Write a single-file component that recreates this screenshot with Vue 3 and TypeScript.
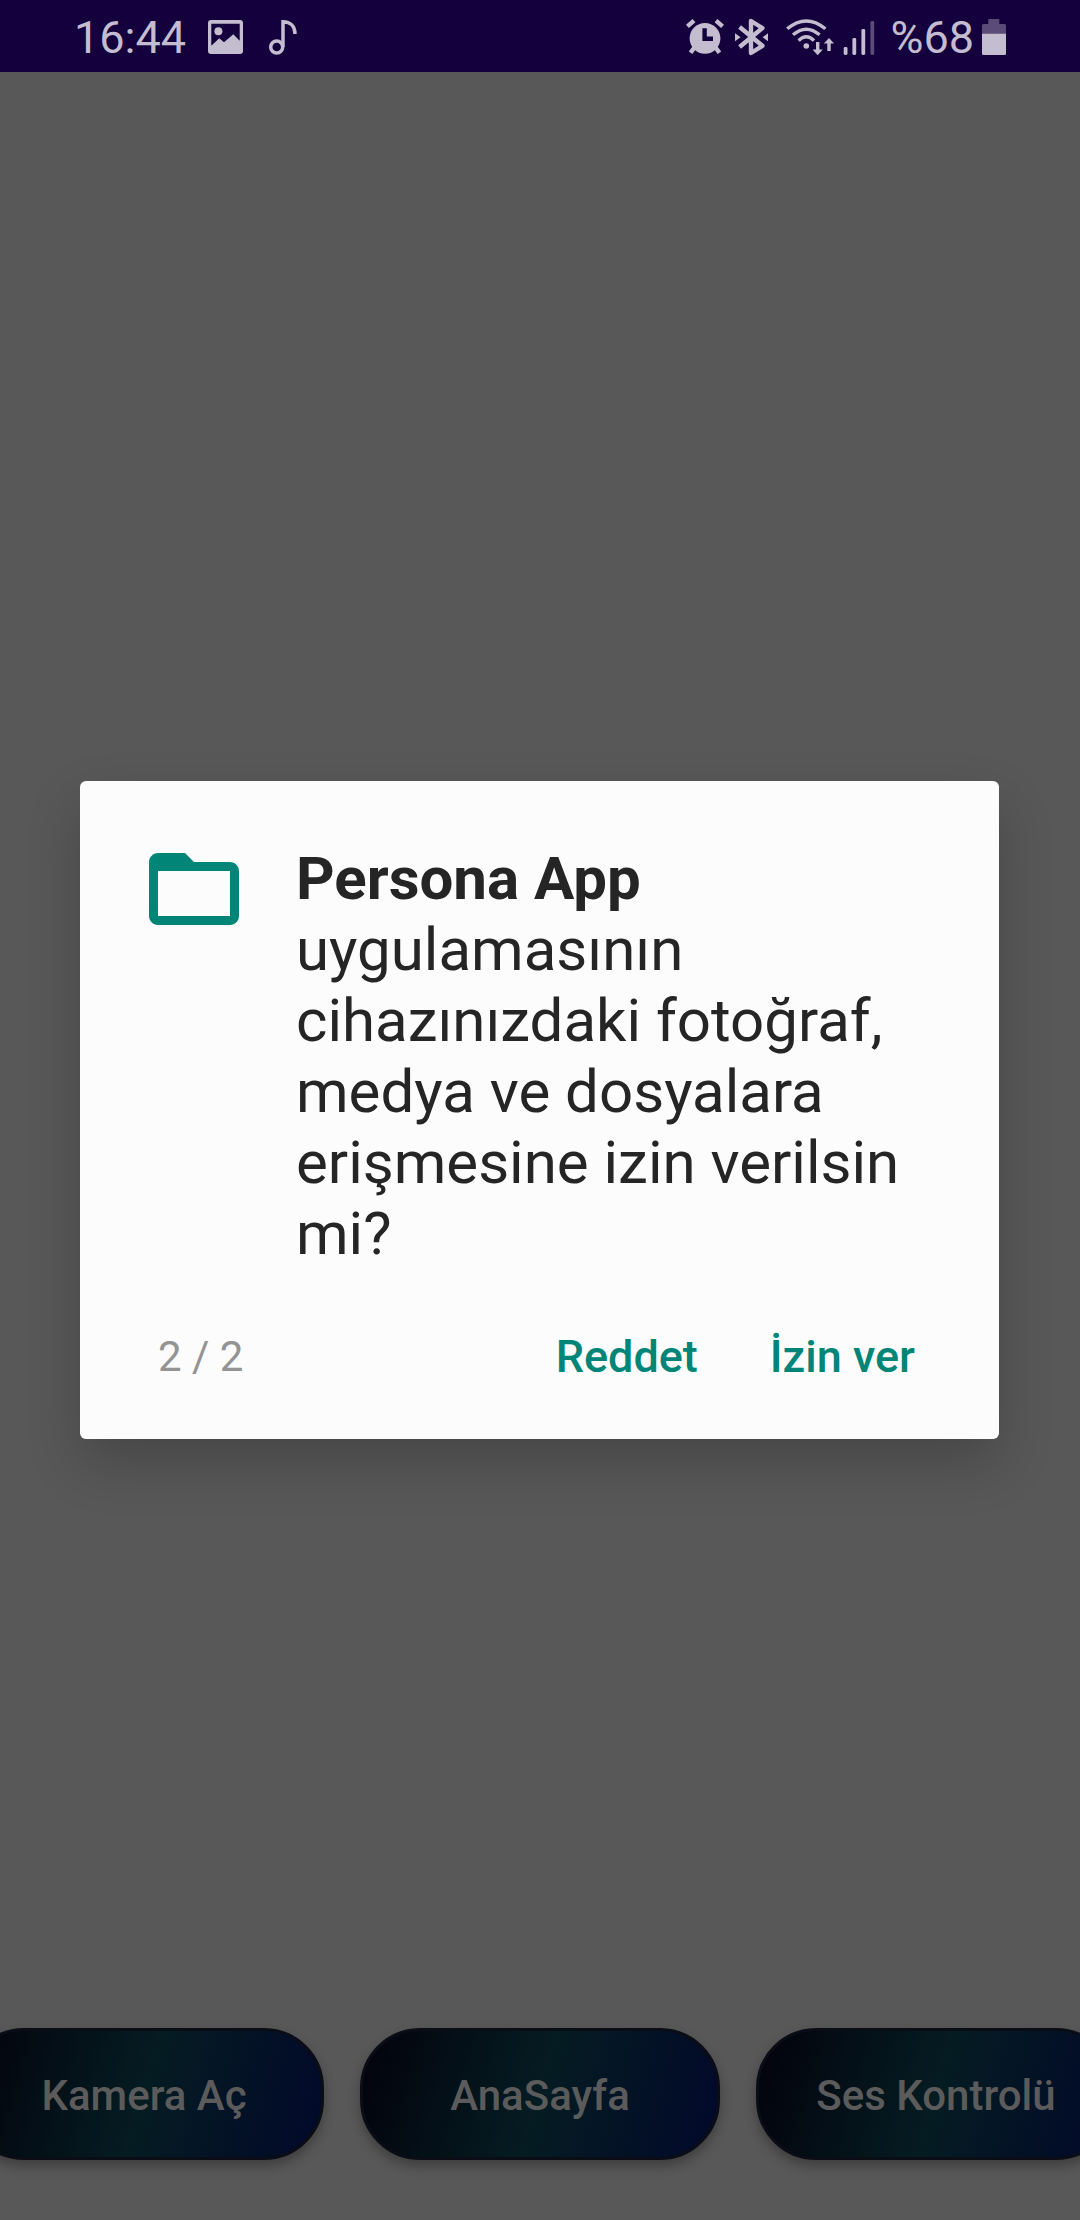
<script setup lang="ts">
import { ref } from 'vue'

interface NavItem {
  id: string
  label: string
}

const navItems: NavItem[] = [
  { id: 'camera', label: 'Kamera Aç' },
  { id: 'home', label: 'AnaSayfa' },
  { id: 'sound', label: 'Ses Kontrolü' },
]

const step = ref(2)
const totalSteps = 2
</script>

<template>
  <div class="screen">
    <header class="status-bar">
      <div class="status-left">
        <span class="status-text">16:44</span>
        <svg class="picture" width="35" height="40" viewBox="0 0 35 40" aria-hidden="true">
          <path
            fill="currentColor"
            fill-rule="evenodd"
            d="M3 4H32Q35 4 35 7V35Q35 38 32 38H3Q0 38 0 35V7Q0 4 3 4ZM3.3 7.8V29.7L11.3 22.3L16 26.3L25.3 18.3L31.7 24.7V7.8Z"
          />
          <circle cx="10.4" cy="15.3" r="4" fill="currentColor" />
        </svg>
        <svg class="note" width="30" height="40" viewBox="0 0 30 40" aria-hidden="true">
          <g fill="none" stroke="currentColor" stroke-width="3.5">
            <circle cx="8.7" cy="31" r="6" />
            <path d="M15 31V5.8C22.5 5.8 27 10.5 27 18" />
          </g>
        </svg>
      </div>
      <div class="status-right">
        <svg class="alarm" width="38" height="40" viewBox="0 0 38 40" aria-hidden="true">
          <circle cx="19" cy="22.3" r="15.4" fill="currentColor" />
          <path d="M18.6 12.3V22.8H27" fill="none" stroke="#14003c" stroke-width="4.4" />
          <path
            d="M1.4 10.4L8 4.6M30 4.6L36.6 10.4M8 32L4.6 36.8M30 32L33.4 36.8"
            fill="none"
            stroke="currentColor"
            stroke-width="4.4"
          />
        </svg>
        <svg class="bluetooth" width="33" height="40" viewBox="0 0 33 40" aria-hidden="true">
          <path
            d="M4.6 11L27.4 29.8L16 37V5L27.4 12L4.6 31"
            fill="none"
            stroke="currentColor"
            stroke-width="4.4"
            stroke-linejoin="round"
          />
          <path d="M0 17.3L5.6 21.3L0 25.3ZM33 17.3L27.6 21.3L33 25.3Z" fill="currentColor" />
        </svg>
        <svg class="wifi" width="49" height="40" viewBox="0 0 49 40" aria-hidden="true">
          <g fill="none" stroke="currentColor" stroke-width="3.4">
            <path d="M1.2 12.8Q20.3 -3 39.4 12.8" />
            <path d="M7 18.8Q20.3 7.6 33.6 18.8" />
            <path d="M12.6 24.6Q20.3 17 28 24.6" />
            <path d="M31.7 26V35M43 35V26" />
          </g>
          <circle cx="20.3" cy="30" r="2.8" fill="currentColor" />
          <path d="M26.6 33.6H36.8L31.7 39.2ZM37.9 27.6H48.1L43 22Z" fill="currentColor" />
        </svg>
        <svg class="signal" width="32" height="40" viewBox="0 0 32 40" aria-hidden="true">
          <g fill="currentColor">
            <rect x="0.7" y="31" width="3.8" height="8" rx="1.4" />
            <rect x="9.4" y="22" width="3.8" height="17" rx="1.4" />
            <rect x="18.4" y="13" width="3.8" height="26" rx="1.4" />
          </g>
          <rect x="27.4" y="5" width="3.8" height="34" rx="1.4" fill="#5a4b78" />
        </svg>
        <span class="status-text percent">%68</span>
        <svg class="battery" width="24" height="40" viewBox="0 0 24 40" aria-hidden="true">
          <path d="M6.3 3H17.3V8H22.5Q24 8 24 9.5V18H0V9.5Q0 8 1.5 8H6.3Z" fill="#5a4b78" />
          <path d="M0 17.7H24V37.5Q24 39 22.5 39H1.5Q0 39 0 37.5Z" fill="currentColor" />
        </svg>
      </div>
    </header>

    <main class="content"></main>

    <nav class="bottom-nav">
      <button v-for="item in navItems" :key="item.id" type="button" class="pill">
        {{ item.label }}
      </button>
    </nav>

    <div class="dialog-layer">
      <section class="dialog" role="dialog" aria-modal="true" aria-labelledby="permission-message">
        <div class="dialog-body">
          <svg class="folder" width="108" height="108" viewBox="0 0 24 24" aria-hidden="true">
            <path
              fill="#008577"
              d="M20 6H12L10 4H4C2.9 4 2.01 4.9 2.01 6L2 18C2 19.1 2.9 20 4 20H20C21.1 20 22 19.1 22 18V8C22 6.9 21.1 6 20 6ZM20 18H4V8H20V18Z"
            />
          </svg>
          <p id="permission-message" class="message">
            <strong>Persona App</strong> uygulamasının cihazınızdaki fotoğraf, medya ve dosyalara
            erişmesine izin verilsin mi?
          </p>
        </div>
        <footer class="dialog-footer">
          <span class="counter">{{ step }} / {{ totalSteps }}</span>
          <div class="actions">
            <button type="button" class="action">Reddet</button>
            <button type="button" class="action">İzin ver</button>
          </div>
        </footer>
      </section>
    </div>
  </div>
</template>

<style>
body {
  margin: 0;
  background: #585858;
}
</style>

<style scoped>
.screen {
  position: relative;
  display: flex;
  flex-direction: column;
  min-height: 100vh;
  overflow: hidden;
  background: #585858;
  font-family: Roboto, "Noto Sans", sans-serif;
}

button {
  margin: 0;
  border: 0;
  background: none;
  font-family: inherit;
  cursor: pointer;
}

svg {
  display: block;
  flex: none;
}

.status-bar {
  display: flex;
  align-items: center;
  justify-content: space-between;
  height: 72px;
  padding: 0 74px;
  background: #14003c;
  color: #c4bdd0;
}

.status-left,
.status-right {
  display: flex;
  align-items: center;
}

.status-text {
  padding-top: 4px;
  font-size: 45px;
  line-height: 68px;
}

.picture {
  margin-left: 22px;
}

.note {
  margin-left: 25px;
}

.bluetooth {
  margin-left: 11px;
}

.wifi {
  margin-left: 18px;
}

.signal {
  margin-left: 8px;
}

.percent {
  margin-left: 15px;
}

.battery {
  margin-left: 8px;
}

.content {
  flex: 1;
}

.bottom-nav {
  display: flex;
  justify-content: center;
  gap: 36px;
  padding-bottom: 60px;
}

.pill {
  flex: none;
  box-sizing: border-box;
  width: 360px;
  height: 132px;
  padding: 3px 0 0;
  border: 3px solid #0b0d16;
  border-radius: 60px;
  background: linear-gradient(106deg, #03050e 5%, #051c22 50%, #020a29 95%);
  box-shadow: 0 6px 12px rgba(0, 0, 0, 0.3);
  color: #5b5b5b;
  font-size: 42px;
  font-weight: 500;
  line-height: 50px;
  white-space: nowrap;
}

.dialog-layer {
  position: absolute;
  inset: 0;
  display: flex;
  align-items: center;
  padding: 0 81px 0 80px;
}

.dialog {
  flex: 1;
  border-radius: 6px;
  background: #fcfcfc;
  box-shadow: 0 24px 54px rgba(0, 0, 0, 0.2);
}

.dialog-body {
  display: flex;
  align-items: flex-start;
  gap: 48px;
  padding: 54px 72px 0 60px;
}

.message {
  flex: 1;
  margin: 0;
  padding-top: 8px;
  color: #252525;
  font-size: 60px;
  line-height: 71px;
}

.message strong {
  font-weight: 700;
}

.dialog-footer {
  display: flex;
  align-items: center;
  justify-content: space-between;
  padding: 35px 60px 29px 78px;
}

.counter {
  color: #939393;
  font-size: 42px;
  line-height: 54px;
}

.actions {
  display: flex;
  gap: 24px;
}

.action {
  padding: 26px 24px;
  color: #008577;
  font-size: 45px;
  font-weight: 500;
  line-height: 54px;
}
</style>
